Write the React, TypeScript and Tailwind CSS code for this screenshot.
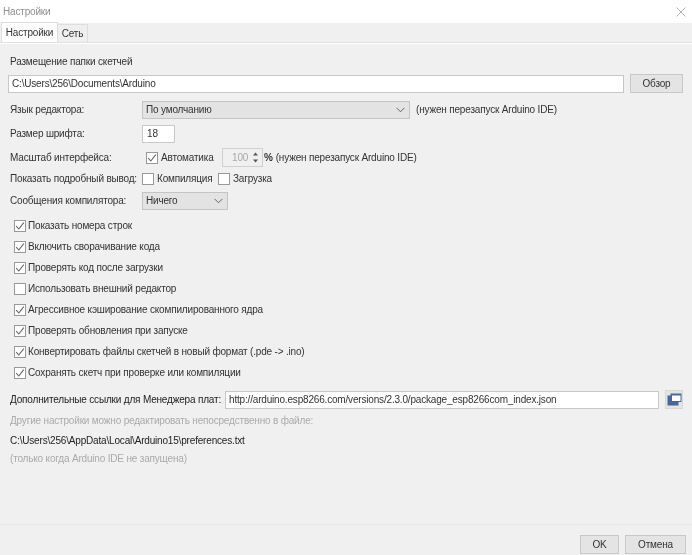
const font = "font-['Liberation_Sans',sans-serif] text-[10px] leading-none whitespace-nowrap tracking-[-0.18px] text-[#333]";

const Check = ({ checked = false }: { checked?: boolean }) => (
  <span className="flex h-[12px] w-[12px] shrink-0 items-center justify-center border border-[#999] bg-white">
    {checked && (
      <svg width="10" height="10" viewBox="0 0 10 10" fill="none">
        <path d="M1.2 5.2 L3.8 8 L8.8 1.6" stroke="#666" strokeWidth="1.1" />
      </svg>
    )}
  </span>
);

const Chevron = () => (
  <svg width="9" height="6" viewBox="0 0 9 6" fill="none">
    <path d="M0.5 0.8 L4.5 4.8 L8.5 0.8" stroke="#666" strokeWidth="1" />
  </svg>
);

const Combo = ({ value, className }: { value: string; className: string }) => (
  <div className={`flex h-[18px] items-center justify-between border border-[#c4c4c4] bg-[#e3e3e3] pl-[3px] pr-[4px] ${className}`}>
    <span>{value}</span>
    <Chevron />
  </div>
);

const Button = ({ label, className }: { label: string; className: string }) => (
  <div className={`flex items-center justify-center border border-[#c8c8c8] bg-[#e4e4e4] ${className}`}>{label}</div>
);

const options: [string, boolean][] = [
  ["Показать номера строк", true],
  ["Включить сворачивание кода", true],
  ["Проверять код после загрузки", true],
  ["Использовать внешний редактор", false],
  ["Агрессивное кэширование скомпилированного ядра", true],
  ["Проверять обновления при запуске", true],
  ["Конвертировать файлы скетчей в новый формат (.pde -> .ino)", true],
  ["Сохранять скетч при проверке или компиляции", true],
];

export default function App() {
  return (
    <div className={`flex h-[555px] w-[692px] flex-col overflow-hidden bg-[#f0f0f0] blur-[0.7px] ${font}`}>
      <div className="flex h-[23px] shrink-0 items-center justify-between bg-white pl-[3px] pr-[6px] text-[#8f8f8f]">
        <span>Настройки</span>
        <svg width="10" height="10" viewBox="0 0 10 10" fill="none">
          <path d="M0.5 0.5 L9.5 9.5 M9.5 0.5 L0.5 9.5" stroke="#b0b0b0" strokeWidth="1" />
        </svg>
      </div>

      <div className="flex h-[20px] shrink-0 items-end border-b border-[#e0e0e0] pl-[1px]">
        <div className="flex h-[20px] w-[57px] items-center justify-center border border-b-0 border-[#dedede] bg-white">Настройки</div>
        <div className="flex h-[18px] w-[30px] items-center justify-center border border-b-0 border-l-0 border-[#dedede] bg-[#efefef]">Сеть</div>
      </div>

      <div className="flex grow flex-col border-t border-white pl-[10px] pr-[9px] pt-[13px]">
        <div className="h-[10px]">Размещение папки скетчей</div>
        <div className="mt-[7px] flex items-center gap-[6px] -ml-[2px]">
          <div className="flex h-[18px] w-[616px] items-center border border-[#c8c8c8] bg-white pl-[3px]">C:\Users\256\Documents\Arduino</div>
          <Button label="Обзор" className="h-[19px] w-[53px]" />
        </div>

        <div className="mt-[8px] flex h-[18px] items-center">
          <span className="w-[132px]">Язык редактора:</span>
          <Combo value="По умолчанию" className="w-[268px]" />
          <span className="ml-[6px]">(нужен перезапуск Arduino IDE)</span>
        </div>

        <div className="mt-[6px] flex h-[18px] items-center">
          <span className="w-[132px]">Размер шрифта:</span>
          <div className="flex h-[18px] w-[33px] items-center border border-[#c8c8c8] bg-white pl-[4px]">18</div>
        </div>

        <div className="mt-[5px] flex h-[19px] items-center">
          <span className="w-[136px]">Масштаб интерфейса:</span>
          <Check checked />
          <span className="ml-[3px] w-[61px]">Автоматика</span>
          <div className="flex h-[19px] w-[41px] items-center justify-between border border-[#d0d0d0] bg-[#f0f0f0] pl-[9px] pr-[3px] text-[#a8a8a8]">
            <span>100</span>
            <svg width="7" height="11" viewBox="0 0 7 11" fill="#555">
              <path d="M3.5 0.5 L6 3.5 H1 Z M3.5 10.5 L6 7.5 H1 Z" />
            </svg>
          </div>
          <span className="ml-[1px] font-bold">%</span>
          <span className="ml-[3px]">(нужен перезапуск Arduino IDE)</span>
        </div>

        <div className="mt-[3px] flex h-[18px] items-center">
          <span className="w-[132px]">Показать подробный вывод:</span>
          <Check />
          <span className="ml-[3px] w-[61px]">Компиляция</span>
          <Check />
          <span className="ml-[3px]">Загрузка</span>
        </div>

        <div className="mt-[4px] flex h-[18px] items-center">
          <span className="w-[132px]">Сообщения компилятора:</span>
          <Combo value="Ничего" className="w-[86px]" />
        </div>

        <div className="mt-[10px] flex flex-col gap-[9px] pl-[4px]">
          {options.map(([label, checked]) => (
            <div key={label} className="flex h-[12px] items-center gap-[2px]">
              <Check checked={checked} />
              <span>{label}</span>
            </div>
          ))}
        </div>

        <div className="mt-[11px] flex h-[19px] items-center">
          <span className="w-[215px] text-[#222]">Дополнительные ссылки для Менеджера плат:</span>
          <div className="flex h-[18px] w-[434px] items-center border border-[#c8c8c8] bg-white pl-[3px]">http://arduino.esp8266.com/versions/2.3.0/package_esp8266com_index.json</div>
          <div className="ml-[6px] flex h-[19px] w-[18px] items-center justify-center border border-[#d8d8d8] bg-[#e4e4e4]">
            <svg width="15" height="13" viewBox="0 0 15 13">
              <rect x="0.5" y="2.5" width="11" height="10" fill="#47669c" />
              <rect x="3.5" y="0.5" width="11" height="8.5" fill="#47669c" />
              <rect x="5" y="2.5" width="8.5" height="5.5" fill="#fff" />
            </svg>
          </div>
        </div>

        <div className="mt-[7px] text-[#aaaaaa]">Другие настройки можно редактировать непосредственно в файле:</div>
        <div className="mt-[10px] text-[#222]">C:\Users\256\AppData\Local\Arduino15\preferences.txt</div>
        <div className="mt-[8px] text-[#aaaaaa]">(только когда Arduino IDE не запущена)</div>
      </div>

      <div className="flex h-[31px] shrink-0 items-start justify-end gap-[6px] border-t border-[#e6e6e6] pr-[6px] pt-[10px]">
        <Button label="OK" className="h-[19px] w-[39px]" />
        <Button label="Отмена" className="h-[19px] w-[61px]" />
      </div>
    </div>
  );
}
